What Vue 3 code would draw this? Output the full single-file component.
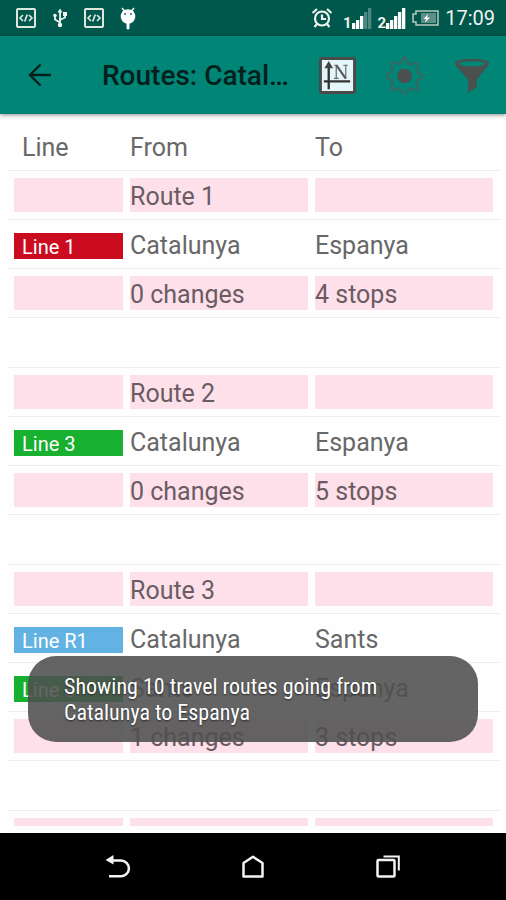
<script setup>
const empty = { kind: 'spacer' }
const title = (n) => ({ kind: 'band', from: `Route ${n}`, to: '' })
const total = (changes, stops) => ({ kind: 'band', from: `${changes} changes`, to: `${stops} stops` })
const leg = (line, color, from, to) => ({ kind: 'leg', line, color, from, to })

const rows = [
  title(1),
  leg('Line 1', 'red', 'Catalunya', 'Espanya'),
  total(0, 4),
  empty,
  title(2),
  leg('Line 3', 'green', 'Catalunya', 'Espanya'),
  total(0, 5),
  empty,
  title(3),
  leg('Line R1', 'blue', 'Catalunya', 'Sants'),
  leg('Line 3', 'green', 'Sants', 'Espanya'),
  total(1, 3),
  empty,
  { kind: 'band', from: '', to: '' },
]
</script>

<template>
  <div class="screen">
    <div class="status">
      <div class="notes">
        <svg class="note" viewBox="0 0 20 20" fill="none" stroke="#dfe6de">
          <rect x="1" y="1" width="18" height="18" rx="1" stroke-width="2" />
          <path d="M7 7 4 10l3 3M13 7l3 3-3 3M11.300 6.500 8.700 13.500" stroke-width="1.700" />
        </svg>
        <svg class="note" viewBox="0 0 20 20" fill="none" stroke="#f2f5f2" stroke-width="1.800">
          <path d="M10 3v14M10 14.500 5 11.500V7.500M10 12l5-2.500V6" />
          <path d="M7.500 4.500 10 .5l2.500 4z" fill="#f2f5f2" stroke="none" />
          <circle cx="10" cy="17" r="2.200" fill="#f2f5f2" stroke="none" />
          <circle cx="5" cy="7.500" r="1.800" fill="#f2f5f2" stroke="none" />
          <path d="M13 4h4v4h-4z" fill="#f2f5f2" stroke="none" />
        </svg>
        <svg class="note" viewBox="0 0 20 20" fill="none" stroke="#dfe6de">
          <rect x="1" y="1" width="18" height="18" rx="1" stroke-width="2" />
          <path d="M7 7 4 10l3 3M13 7l3 3-3 3M11.300 6.500 8.700 13.500" stroke-width="1.700" />
        </svg>
        <svg class="note droid" viewBox="0 0 20 24">
          <path d="M4 2 6.500 5M16 2 13.500 5" stroke="#fff" stroke-width="1.500" />
          <circle cx="10" cy="10.500" r="7.300" fill="#fff" />
          <path d="M8.500 16h3v6a1.500 1.500 0 0 1-3 0z" fill="#fff" />
          <circle cx="7" cy="8" r=".9" fill="#00574b" />
          <circle cx="13" cy="8" r=".9" fill="#00574b" />
        </svg>
      </div>
      <div class="system">
        <svg class="alarm" viewBox="0 0 22 22" fill="none" stroke="#eef3f0" stroke-width="2.200">
          <circle cx="11" cy="11.500" r="7" />
          <path d="M11 7.500V12h4M1.500 6 6 2M20.500 6 16 2M6 17l-2.500 3M16 17l2.500 3" />
        </svg>
        <span class="signal">
          <b>1</b>
          <svg class="bars" viewBox="0 0 20 22" fill="#fff">
            <path d="M0 16h3.300v6H0zM4 13h3.300v9H4zM8 9h3.300v13H8z" />
            <path d="M12 5h3.300v17H12zM16 1h3.300v21H16z" opacity=".3" />
          </svg>
        </span>
        <span class="signal">
          <b>2</b>
          <svg class="bars" viewBox="0 0 20 22" fill="#fff">
            <path d="M0 16h3.300v6H0zM4 13h3.300v9H4zM8 9h3.300v13H8zM12 5h3.300v17H12zM16 1h3.300v21H16z" />
          </svg>
        </span>
        <svg class="battery" viewBox="0 0 27 16">
          <path d="M4 1h22v14H4v-3H1V4h3z" fill="none" stroke="#b5c8c0" stroke-width="1.500" />
          <path d="M9 3h15v10H9z" fill="#5d8f84" />
          <path d="M16 4 11.500 9h2.500l-1 3.500L18 7.500h-3z" fill="#fff" />
        </svg>
        <time class="clock">17:09</time>
      </div>
    </div>

    <header class="appbar">
      <button class="icon-btn" aria-label="Back">
        <svg class="back" viewBox="0 0 24 24" fill="none" stroke="#04201c" stroke-width="2.400">
          <path d="M23 12H2.500M12.500 1.500 2 12l10.500 10.500" />
        </svg>
      </button>
      <h1>Routes: Catalunya to Espanya</h1>
      <div class="actions">
        <button class="icon-btn" aria-label="Sort by number">
          <svg class="act" viewBox="0 0 38 38">
            <rect x="1.500" y="1.500" width="35" height="35" rx="1" fill="#e4f7f8" stroke="#4a4a4a" stroke-width="3" />
            <path d="M10 33V8M5 25h27" fill="none" stroke="#333" stroke-width="2.400" />
            <path d="M5.500 11.500 10 4l4.500 7.500z" fill="#444" />
            <path d="M15.500 8.500h4M25 8.500h4.500M15.500 22h4.500M17.700 8.500V22M27.500 8.500v14" fill="none" stroke="#666" stroke-width="1.200" />
            <path d="M18 8.500 27.300 22" stroke="#5a5a5a" stroke-width="2.200" />
          </svg>
        </button>
        <button class="icon-btn" aria-label="Settings">
          <svg class="act" viewBox="0 0 38 38">
            <path
              d="M16.500 3 17.500 1h3l1 2 .8 3.500 3.700 1.600 3.200-2 2.300-.6 2 2-.6 2.300-2 3.200 1.600 3.700 3.500.8 1.600 1v3l-1.600 1-3.500.8-1.600 3.700 2 3.200.6 2.300-2 2-2.300-.6-3.200-2-3.700 1.600-.8 3.500-1 1.500h-3l-1-1.500-.8-3.500-3.700-1.600-3.200 2-2.300.6-2-2 .6-2.300 2-3.200-1.600-3.700L2 22 .7 21v-3L2 17l3.500-.8 1.600-3.700-2-3.200L4.500 7l2-2 2.300.6 3.200 2 3.700-1.600z"
              fill="none" stroke="#3d645e" stroke-width="1.900" stroke-linejoin="round" />
            <circle cx="19" cy="19.500" r="7.500" fill="#4b4f4e" />
          </svg>
        </button>
        <button class="icon-btn" aria-label="Filter">
          <svg class="act" viewBox="0 0 38 38" fill="#4b4f4e">
            <path fill-rule="evenodd" d="M2 6.500C2 3.500 9 2 19.500 2S37 3.500 37 6.500c0 2-2 3.500-4 5.500l-8.500 11.500v7L15.500 37V23.500L6 12C4 10 2 8.500 2 6.500zM5.500 6.700c1.500 2 7 3 14 3s12.500-1 14-3c-1.500-1.500-7-2.300-14-2.300s-12.500.8-14 2.300z" />
          </svg>
        </button>
      </div>
    </header>

    <main class="list">
      <table>
        <thead>
          <tr>
            <th class="first">Line</th>
            <th>From</th>
            <th>To</th>
          </tr>
        </thead>
        <tbody>
          <tr v-for="(row, i) in rows" :key="i" :class="row.kind">
            <td><span v-if="row.line" class="badge" :class="row.color">{{ row.line }}</span></td>
            <td>{{ row.from }}</td>
            <td>{{ row.to }}</td>
          </tr>
        </tbody>
      </table>
    </main>

    <nav class="navbar">
      <button class="icon-btn" aria-label="Back">
        <svg class="nav" viewBox="0 0 26 26" fill="none" stroke="#f4f4f4" stroke-width="2.500">
          <path d="M7 6.500h9a7.800 7.800 0 0 1 0 15.800H4" />
          <path d="M.5 6 8.500 1v9.500z" fill="#f4f4f4" stroke="none" />
        </svg>
      </button>
      <button class="icon-btn" aria-label="Home">
        <svg class="nav" viewBox="0 0 26 26" fill="none" stroke="#f4f4f4" stroke-width="2.500">
          <path d="M3.500 22.500V9L13 2.800 22.500 9v13.500z" stroke-linejoin="round" />
        </svg>
      </button>
      <button class="icon-btn" aria-label="Recent apps">
        <svg class="nav" viewBox="0 0 26 26" fill="none" stroke="#f4f4f4" stroke-width="2.500">
          <rect x="2.500" y="6" width="17" height="16.500" rx="1" />
          <path d="M8.500 2.500h15.300v14" stroke-width="2" />
        </svg>
      </button>
    </nav>

    <div class="toast" role="status">Showing 10 travel routes going from Catalunya to Espanya</div>
  </div>
</template>

<style>
body {
  margin: 0;
  background: #fefefe;
}
</style>

<style scoped>
.screen {
  position: relative;
  display: flex;
  flex-direction: column;
  height: 100vh;
  overflow: hidden;
  background: #fefefe;
  color: #686868;
  font-family: Roboto, sans-serif;
}
svg {
  display: block;
}
.status {
  display: flex;
  flex: none;
  align-items: center;
  justify-content: space-between;
  height: 36px;
  padding: 0 11px 0 16px;
  background: #00574b;
  color: #eef3f0;
}
.notes {
  display: flex;
  align-items: center;
  gap: 14px;
}
.note {
  width: 20px;
  height: 20px;
}
.droid {
  height: 24px;
}
.system {
  display: flex;
  align-items: center;
  gap: 6px;
}
.alarm {
  width: 22px;
  height: 22px;
  margin-right: 4px;
}
.signal {
  display: flex;
  align-items: flex-end;
}
.signal b {
  font-size: 15px;
  line-height: 12px;
}
.bars {
  width: 20px;
  height: 22px;
}
.battery {
  width: 27px;
  height: 16px;
}
.clock {
  font-size: 20px;
  line-height: 36px;
}
.appbar {
  z-index: 1;
  display: flex;
  flex: none;
  align-items: center;
  height: 78px;
  padding: 0 16px 0 28px;
  box-sizing: border-box;
  background: #008577;
  box-shadow: 0 1px 4px rgba(0, 0, 0, 0.45);
}
.icon-btn {
  flex: none;
  padding: 0;
  border: 0;
  background: none;
}
.back {
  width: 24px;
  height: 24px;
}
h1 {
  flex: 1;
  margin: 0 26px 0 50px;
  padding-top: 2px;
  overflow: hidden;
  color: #04201c;
  font-size: 28px;
  font-weight: 500;
  line-height: 36px;
  text-overflow: ellipsis;
  white-space: nowrap;
}
.actions {
  display: flex;
  gap: 30px;
}
.act {
  width: 37px;
  height: 37px;
}
.list {
  flex: 1;
  min-height: 0;
  margin: 8px 6px 7px 8px;
  overflow: hidden;
}
table,
thead,
tbody {
  display: block;
}
tr {
  display: grid;
  grid-template-columns: 109fr 178fr 178fr;
  gap: 7px;
  height: 49px;
  padding: 7px 7px 7px 6px;
  box-sizing: border-box;
  border-bottom: 1px solid #ebeeef;
}
.spacer {
  height: 50px;
}
th,
td {
  height: 34px;
  padding: 0;
  font-size: 25px;
  font-weight: 400;
  line-height: 38px;
  text-align: left;
  white-space: nowrap;
}
.first {
  padding-left: 8px;
}
.band td {
  background: #fde0ea;
  color: #6b5b62;
}
.badge {
  display: block;
  height: 26px;
  margin-top: 6px;
  padding-left: 8px;
  color: #fff;
  font-size: 20px;
  line-height: 28px;
}
.red {
  background: #cb0c20;
}
.green {
  background: #17b02f;
}
.blue {
  background: #62b3e4;
}
.navbar {
  display: flex;
  flex: none;
  align-items: center;
  justify-content: center;
  gap: 109px;
  height: 67px;
  background: #000;
}
.nav {
  width: 26px;
  height: 26px;
}
.toast {
  position: absolute;
  right: 28px;
  bottom: 158px;
  left: 28px;
  z-index: 2;
  padding: 18px 84px 16px 36px;
  border-radius: 28px;
  background: rgba(79, 79, 79, 0.88);
  color: #fff;
  font-family: "Roboto Condensed", "Liberation Sans Narrow", Roboto, sans-serif;
  font-size: 22px;
  line-height: 26px;
  text-shadow: 0 1px 2px rgba(0, 0, 0, 0.6);
}
</style>
